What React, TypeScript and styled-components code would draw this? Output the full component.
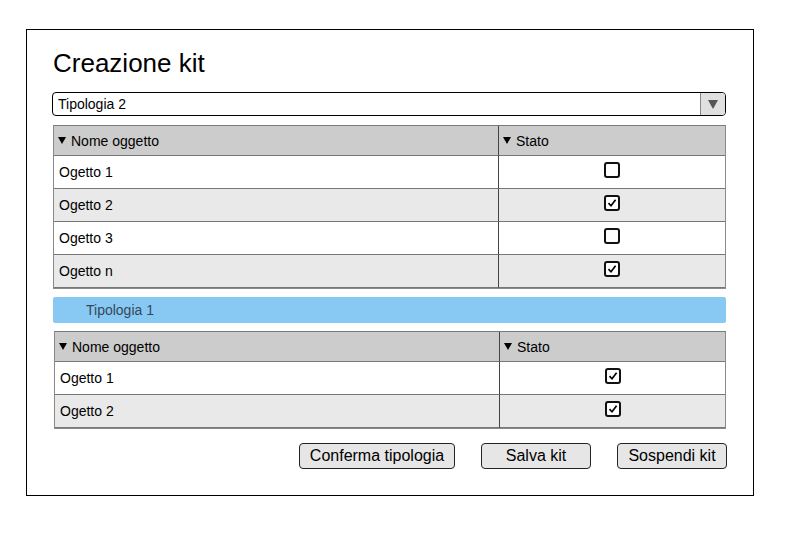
import styled, { createGlobalStyle } from "styled-components";

const GlobalStyle = createGlobalStyle`
  body {
    margin: 0;
    background: #ffffff;
    font-family: "Liberation Sans", Arial, sans-serif;
    color: #000000;
  }
`;

const Frame = styled.div`
  box-sizing: border-box;
  margin: 29px 0 0 26px;
  width: 728px;
  height: 467px;
  border: 1px solid #000000;
  padding: 18px 26px 0 26px;
  display: flex;
  flex-direction: column;
`;

const Title = styled.h1`
  margin: 0;
  font-size: 26px;
  line-height: 30px;
  font-weight: normal;
`;

const Select = styled.div`
  box-sizing: border-box;
  margin: 14px 0 0 -1px;
  width: 674px;
  height: 24px;
  border: 1px solid #000000;
  border-radius: 4px;
  display: flex;
  align-items: center;
  overflow: hidden;
  font-size: 14px;
`;

const SelectValue = styled.span`
  flex: 1;
  padding-left: 5px;
`;

const SelectButton = styled.div`
  width: 24px;
  height: 100%;
  background: #e0e0e0;
  border-left: 1px solid #888888;
  display: flex;
  align-items: center;
  justify-content: center;
`;

const DownArrow = styled.span<{ $size: number; $color: string }>`
  width: 0;
  height: 0;
  border-left: ${(p) => p.$size}px solid transparent;
  border-right: ${(p) => p.$size}px solid transparent;
  border-top: ${(p) => Math.round(p.$size * 1.7)}px solid ${(p) => p.$color};
`;

const Table = styled.div<{ $top: number; $shift: number }>`
  box-sizing: border-box;
  margin: ${(p) => p.$top}px 0 0 ${(p) => p.$shift}px;
  width: ${(p) => 673 - p.$shift}px;
  border: 1px solid #8a8a8a;
  border-top-color: #7a7a7a;
  display: grid;
  grid-template-columns: 444px 1fr;
  font-size: 14px;
`;

const HeadCell = styled.div<{ $first?: boolean }>`
  box-sizing: border-box;
  height: 30px;
  background: #cccccc;
  border-bottom: 1px solid #777777;
  border-left: ${(p) => (p.$first ? "none" : "1px solid #444444")};
  display: flex;
  align-items: center;
  gap: 5px;
  padding-left: 4px;
`;

const Cell = styled.div<{ $alt: boolean; $first?: boolean; $center?: boolean }>`
  box-sizing: border-box;
  height: 33px;
  background: ${(p) => (p.$alt ? "#e9e9e9" : "#ffffff")};
  border-bottom: 1px solid #777777;
  border-left: ${(p) => (p.$first ? "none" : "1px solid #444444")};
  display: flex;
  align-items: center;
  justify-content: ${(p) => (p.$center ? "center" : "flex-start")};
  padding-left: ${(p) => (p.$center ? "0" : "5px")};
`;

const Box = styled.span`
  box-sizing: border-box;
  width: 16px;
  height: 16px;
  margin-bottom: 5px;
  border: 2px solid #111111;
  border-radius: 3px;
  display: flex;
  align-items: center;
  justify-content: center;
  background: #ffffff;
`;

const GroupBar = styled.div`
  margin-top: 8px;
  width: 673px;
  height: 26px;
  background: #88c9f4;
  border-radius: 2px;
  display: flex;
  align-items: center;
  padding-left: 33px;
  box-sizing: border-box;
  font-size: 14px;
  color: #37475a;
`;

const Actions = styled.div`
  margin-top: 14px;
  display: flex;
  justify-content: flex-end;
  gap: 26px;
`;

const Button = styled.button<{ $width: number }>`
  box-sizing: border-box;
  width: ${(p) => p.$width}px;
  height: 26px;
  background: #e6e6e6;
  border: 1px solid #222222;
  border-radius: 4px;
  font-family: "Liberation Sans", Arial, sans-serif;
  font-size: 16px;
  color: #000000;
  padding: 0;
`;

type Item = { name: string; checked: boolean };

function Checkbox({ checked }: { checked: boolean }) {
  return (
    <Box>
      {checked && (
        <svg width="10" height="10" viewBox="0 0 10 10">
          <path d="M1.5 5.2 L4 7.8 L8.6 1.8" fill="none" stroke="#000" strokeWidth="1.7" />
        </svg>
      )}
    </Box>
  );
}

function ItemTable({ items, top, shift }: { items: Item[]; top: number; shift: number }) {
  return (
    <Table $top={top} $shift={shift}>
      <HeadCell $first>
        <DownArrow $size={4} $color="#000" />
        Nome oggetto
      </HeadCell>
      <HeadCell>
        <DownArrow $size={4} $color="#000" />
        Stato
      </HeadCell>
      {items.flatMap((it, i) => [
        <Cell key={i + "n"} $alt={i % 2 === 1} $first>
          {it.name}
        </Cell>,
        <Cell key={i + "s"} $alt={i % 2 === 1} $center>
          <Checkbox checked={it.checked} />
        </Cell>,
      ])}
    </Table>
  );
}

export default function App() {
  const tipologia2: Item[] = [
    { name: "Ogetto 1", checked: false },
    { name: "Ogetto 2", checked: true },
    { name: "Ogetto 3", checked: false },
    { name: "Ogetto n", checked: true },
  ];
  const tipologia1: Item[] = [
    { name: "Ogetto 1", checked: true },
    { name: "Ogetto 2", checked: true },
  ];

  return (
    <>
      <GlobalStyle />
      <Frame>
        <Title>Creazione kit</Title>
        <Select>
          <SelectValue>Tipologia 2</SelectValue>
          <SelectButton>
            <DownArrow $size={5} $color="#555" />
          </SelectButton>
        </Select>
        <ItemTable items={tipologia2} top={9} shift={0} />
        <GroupBar>Tipologia 1</GroupBar>
        <ItemTable items={tipologia1} top={8} shift={1} />
        <Actions>
          <Button $width={156}>Conferma tipologia</Button>
          <Button $width={110}>Salva kit</Button>
          <Button $width={110}>Sospendi kit</Button>
        </Actions>
      </Frame>
    </>
  );
}
